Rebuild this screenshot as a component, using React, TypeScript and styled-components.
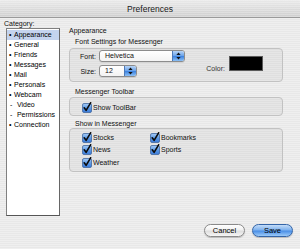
import styled, { createGlobalStyle } from "styled-components";

const GlobalStyle = createGlobalStyle`
  html, body {
    margin: 0;
    padding: 0;
    background: #ececec;
  }
  body {
    font-family: "Liberation Sans", Arial, sans-serif;
    color: #111;
  }
`;

const Window = styled.div`
  width: 300px;
  height: 249px;
  display: flex;
  flex-direction: column;
  overflow: hidden;
  background: repeating-linear-gradient(
    to bottom,
    #efefef 0px,
    #efefef 1px,
    #e8e8e8 1px,
    #e8e8e8 2px
  );
`;

const TitleBar = styled.div`
  height: 18px;
  box-sizing: border-box;
  display: flex;
  align-items: center;
  justify-content: center;
  font-size: 8.5px;
  color: #1a1a1a;
  border-radius: 4px 4px 0 0;
  border-bottom: 1px solid #9a9a9a;
  background: repeating-linear-gradient(to bottom, rgba(255, 255, 255, 0.25) 0 1px, transparent 1px 2px),
    linear-gradient(to bottom, #e9e9e9, #cfcfcf);
`;

const Body = styled.div`
  flex: 1;
  display: flex;
  padding-left: 4px;
`;

const Sidebar = styled.div`
  width: 56px;
  display: flex;
  flex-direction: column;
`;

const CategoryLabel = styled.div`
  font-size: 7px;
  line-height: 8px;
  margin-top: 2px;
  height: 8px;
`;

const List = styled.div`
  margin-left: 2px;
  height: 188px;
  box-sizing: border-box;
  background: #fff;
  border: 1px solid #808080;
  border-bottom-color: #555;
  border-right-color: #666;
  padding-top: 1px;
`;

const ListItem = styled.div<{ $selected?: boolean; $sub?: boolean }>`
  height: 10px;
  line-height: 10px;
  font-family: "Liberation Sans", Arial, sans-serif;
  font-size: 7px;
  color: #000;
  padding-left: ${(p) => (p.$sub ? "3px" : "2px")};
  background: ${(p) => (p.$selected ? "#c4d4ee" : "transparent")};
  white-space: nowrap;
`;

const Bullet = styled.span`
  display: inline-block;
  width: 5px;
`;

const Main = styled.div`
  flex: 1;
  display: flex;
  flex-direction: column;
  margin-left: 9px;
  padding-right: 17px;
  padding-top: 8px;
`;

const SectionTitle = styled.div`
  font-size: 7px;
  line-height: 10px;
`;

const GroupLabel = styled.div<{ $top: number }>`
  font-size: 7px;
  line-height: 10px;
  margin-left: 6px;
  margin-top: ${(p) => p.$top}px;
`;

const GroupBox = styled.div<{ $height: number; $top?: number }>`
  height: ${(p) => p.$height}px;
  margin-top: ${(p) => p.$top ?? 0}px;
  box-sizing: border-box;
  border: 1px solid #c2c2c2;
  border-radius: 4px;
  background: rgba(0, 0, 0, 0.035);
`;

const FontGroup = styled(GroupBox)`
  display: flex;
  padding: 1px 19px 0 0;
`;

const FieldGrid = styled.div`
  display: grid;
  grid-template-columns: 26px auto;
  column-gap: 3px;
  row-gap: 3px;
  align-items: center;
  align-content: start;
`;

const FieldLabel = styled.div`
  font-size: 7px;
  text-align: right;
`;

const Popup = styled.div<{ $width: number }>`
  width: ${(p) => p.$width}px;
  height: 12px;
  box-sizing: border-box;
  display: flex;
  border: 1px solid #8c8c8c;
  border-radius: 3px;
  background: linear-gradient(to bottom, #ffffff, #f3f3f3);
  overflow: hidden;
  box-shadow: 0 1px 0 rgba(0, 0, 0, 0.08);
`;

const PopupText = styled.div`
  flex: 1;
  font-size: 7px;
  line-height: 10px;
  padding-left: 5px;
`;

const PopupCap = styled.div`
  width: 11px;
  display: flex;
  align-items: center;
  justify-content: center;
  border-left: 1px solid #4d79b8;
  background: linear-gradient(to bottom, #b7d4f6 0%, #6ea5ea 45%, #3f84e0 55%, #8cc0f5 100%);
`;

const ColorBlock = styled.div`
  margin-left: auto;
  margin-top: 6px;
  display: flex;
  align-items: flex-end;
  gap: 4px;
  height: 15px;
`;

const ColorLabel = styled.div`
  font-size: 7px;
  color: #333;
  line-height: 8px;
  margin-bottom: -2px;
`;

const Swatch = styled.div`
  width: 34px;
  height: 15px;
  box-sizing: border-box;
  background: #000;
  border: 1px solid #5a5a5a;
`;

const ToolbarGroup = styled(GroupBox)`
  display: flex;
  align-items: center;
  padding-left: 12px;
  padding-top: 1px;
`;

const CheckGrid = styled.div`
  display: grid;
  grid-template-columns: 68px auto;
  grid-auto-rows: 12.5px;
  padding: 2px 0 0 12px;
  align-items: center;
`;

const CheckRow = styled.label`
  display: flex;
  align-items: center;
  gap: 1px;
  font-size: 7px;
  color: #111;
`;

const ButtonRow = styled.div`
  margin-top: auto;
  margin-right: -10px;
  padding-bottom: 12px;
  display: flex;
  justify-content: flex-end;
  gap: 7px;
`;

const PillButton = styled.button<{ $primary?: boolean }>`
  width: 41px;
  height: 13px;
  padding: 0;
  box-sizing: border-box;
  border-radius: 7px;
  font-family: "Liberation Sans", Arial, sans-serif;
  font-size: 7.5px;
  line-height: 11px;
  color: #000;
  border: 1px solid ${(p) => (p.$primary ? "#3465a8" : "#8a8a8a")};
  background: ${(p) =>
    p.$primary
      ? "linear-gradient(to bottom, #c4dcf8 0%, #7fb2ee 45%, #4b8fe6 55%, #9ccaf8 100%)"
      : "linear-gradient(to bottom, #ffffff 0%, #f1f1f1 45%, #dedede 55%, #f6f6f6 100%)"};
  box-shadow: 0 1px 1px rgba(0, 0, 0, 0.2);
`;

const PopupArrows = () => (
  <svg width="5" height="8" viewBox="0 0 5 8">
    <path d="M2.5 0.5 L4.6 3 L0.4 3 Z" fill="#111" />
    <path d="M2.5 7.5 L4.6 5 L0.4 5 Z" fill="#111" />
  </svg>
);

const CheckIcon = () => (
  <svg width="10" height="11" viewBox="0 0 10 11">
    <defs>
      <linearGradient id="cbg" x1="0" y1="0" x2="0" y2="1">
        <stop offset="0" stopColor="#a8cdf6" />
        <stop offset="0.5" stopColor="#5c9ae6" />
        <stop offset="1" stopColor="#3a7ad8" />
      </linearGradient>
    </defs>
    <rect x="0.5" y="1.5" width="9" height="9" rx="1.5" fill="url(#cbg)" stroke="#41679e" strokeWidth="0.8" />
    <path d="M2.2 5.8 L4.1 8.3 L8.6 0.8" fill="none" stroke="#0a0a0a" strokeWidth="1.6" strokeLinecap="round" strokeLinejoin="round" />
  </svg>
);

const categories = [
  { label: "Appearance", selected: true },
  { label: "General" },
  { label: "Friends" },
  { label: "Messages" },
  { label: "Mail" },
  { label: "Personals" },
  { label: "Webcam" },
  { label: "Video", sub: true },
  { label: "Permissions", sub: true },
  { label: "Connection" },
];

const shows = ["Stocks", "Bookmarks", "News", "Sports", "Weather"];

export default function App() {
  return (
    <>
      <GlobalStyle />
      <Window>
        <TitleBar>Preferences</TitleBar>
        <Body>
          <Sidebar>
            <CategoryLabel>Category:</CategoryLabel>
            <List>
              {categories.map((c) => (
                <ListItem key={c.label} $selected={c.selected} $sub={c.sub}>
                  <Bullet>{c.sub ? "-" : "•"}</Bullet>
                  {c.sub ? " " : ""}
                  {c.label}
                </ListItem>
              ))}
            </List>
          </Sidebar>
          <Main>
            <SectionTitle>Appearance</SectionTitle>
            <GroupLabel $top={1}>Font Settings for Messenger</GroupLabel>
            <FontGroup $height={34} $top={1}>
              <FieldGrid>
                <FieldLabel>Font:</FieldLabel>
                <Popup $width={86}>
                  <PopupText>Helvetica</PopupText>
                  <PopupCap>
                    <PopupArrows />
                  </PopupCap>
                </Popup>
                <FieldLabel>Size:</FieldLabel>
                <Popup $width={38}>
                  <PopupText>12</PopupText>
                  <PopupCap>
                    <PopupArrows />
                  </PopupCap>
                </Popup>
              </FieldGrid>
              <ColorBlock>
                <ColorLabel>Color:</ColorLabel>
                <Swatch />
              </ColorBlock>
            </FontGroup>
            <GroupLabel $top={5}>Messenger Toolbar</GroupLabel>
            <ToolbarGroup $height={19}>
              <CheckRow>
                <CheckIcon />
                Show ToolBar
              </CheckRow>
            </ToolbarGroup>
            <GroupLabel $top={3}>Show in Messenger</GroupLabel>
            <GroupBox $height={44} $top={-1}>
              <CheckGrid>
                {shows.map((s) => (
                  <CheckRow key={s}>
                    <CheckIcon />
                    {s}
                  </CheckRow>
                ))}
              </CheckGrid>
            </GroupBox>
            <ButtonRow>
              <PillButton>Cancel</PillButton>
              <PillButton $primary>Save</PillButton>
            </ButtonRow>
          </Main>
        </Body>
      </Window>
    </>
  );
}
